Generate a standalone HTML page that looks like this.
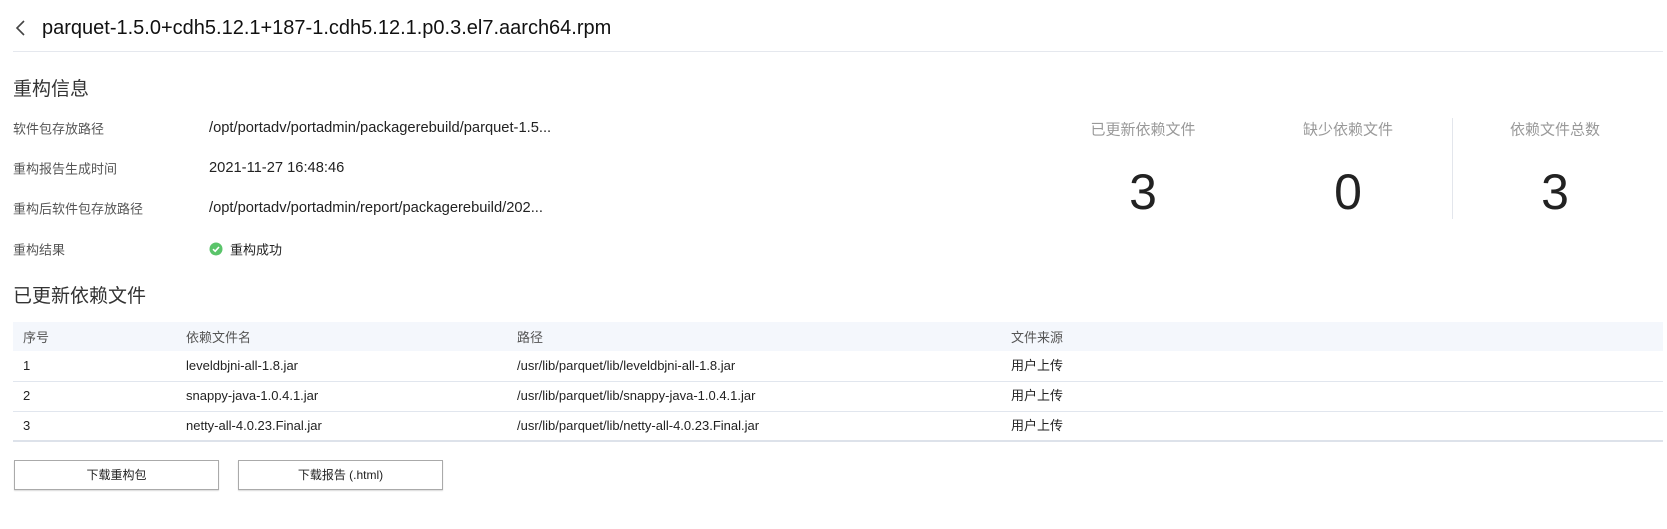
<!DOCTYPE html>
<html><head><meta charset="utf-8"><style>
*{margin:0;padding:0;box-sizing:border-box}
body{width:1667px;height:529px;background:#fff;font-family:"Liberation Sans","Noto Sans CJK SC",sans-serif;color:#222;position:relative;overflow:hidden}
.a{position:absolute;white-space:nowrap}
.lbl{font-size:13px;color:#555;transform:translateY(-50%)}
.val{font-size:14.7px;color:#222;transform:translateY(-50%);left:209px}
.sl{font-size:15px;color:#999;transform:translate(-50%,-50%)}
.num{font-size:50px;color:#222;font-weight:300;transform:translate(-50%,-50%)}
table{position:absolute;left:13px;top:322px;width:1650px;border-collapse:collapse;font-size:13px}
th{background:#f4f7fc;font-weight:normal;color:#555;text-align:left;height:29px;padding-left:10px;vertical-align:middle}
td{height:30px;border-bottom:1px solid #e1e6ee;padding-left:10px;color:#222;vertical-align:middle;line-height:16px}
.btn{position:absolute;top:460px;width:205px;height:30px;border:1px solid #aaa;font-size:12px;text-align:center;line-height:28px;color:#222;box-shadow:0 1px 1px rgba(0,0,0,.15)}
</style></head><body>
<svg class="a" style="left:14px;top:18px" width="14" height="20" viewBox="0 0 14 20"><path d="M10 3 L3 10 L10 17" fill="none" stroke="#444" stroke-width="1.6"/></svg>
<div class="a" style="left:42px;top:17px;font-size:20px;color:#111">parquet-1.5.0+cdh5.12.1+187-1.cdh5.12.1.p0.3.el7.aarch64.rpm</div>
<div class="a" style="left:13px;top:51px;width:1650px;height:1px;background:#e5e8ee"></div>
<div class="a" style="left:13px;top:74px;font-size:19px;color:#333">重构信息</div>
<div class="a lbl" style="left:13px;top:128px">软件包存放路径</div>
<div class="a val" style="top:128px">/opt/portadv/portadmin/packagerebuild/parquet-1.5...</div>
<div class="a lbl" style="left:13px;top:168px">重构报告生成时间</div>
<div class="a val" style="top:168px">2021-11-27 16:48:46</div>
<div class="a lbl" style="left:13px;top:208px">重构后软件包存放路径</div>
<div class="a val" style="top:208px">/opt/portadv/portadmin/report/packagerebuild/202...</div>
<div class="a lbl" style="left:13px;top:249px">重构结果</div>
<svg class="a" style="left:209px;top:242px" width="14" height="14" viewBox="0 0 14 14"><circle cx="7" cy="7" r="6.5" fill="#5ac46a"/><path d="M4 7.2 L6.2 9.2 L10 5" fill="none" stroke="#fff" stroke-width="1.6"/></svg>
<div class="a lbl" style="left:230px;top:249px;color:#222">重构成功</div>
<div class="a sl" style="left:1143px;top:129px">已更新依赖文件</div>
<div class="a sl" style="left:1348px;top:129px">缺少依赖文件</div>
<div class="a sl" style="left:1555px;top:129px">依赖文件总数</div>
<div class="a" style="left:1452px;top:118px;width:1px;height:101px;background:#e3e6ec"></div>
<div class="a num" style="left:1143px;top:192px">3</div>
<div class="a num" style="left:1348px;top:192px">0</div>
<div class="a num" style="left:1555px;top:192px">3</div>
<div class="a" style="left:13px;top:281px;font-size:19px;color:#333">已更新依赖文件</div>
<table>
<tr><th style="width:163px">序号</th><th style="width:331px">依赖文件名</th><th style="width:494px">路径</th><th>文件来源</th></tr>
<tr><td>1</td><td>leveldbjni-all-1.8.jar</td><td>/usr/lib/parquet/lib/leveldbjni-all-1.8.jar</td><td>用户上传</td></tr>
<tr><td>2</td><td>snappy-java-1.0.4.1.jar</td><td>/usr/lib/parquet/lib/snappy-java-1.0.4.1.jar</td><td>用户上传</td></tr>
<tr><td style="border-bottom:2px solid #dde2ea">3</td><td style="border-bottom:2px solid #dde2ea">netty-all-4.0.23.Final.jar</td><td style="border-bottom:2px solid #dde2ea">/usr/lib/parquet/lib/netty-all-4.0.23.Final.jar</td><td style="border-bottom:2px solid #dde2ea">用户上传</td></tr>
</table>
<div class="btn" style="left:14px">下载重构包</div>
<div class="btn" style="left:238px">下载报告 (.html)</div>
</body></html>
